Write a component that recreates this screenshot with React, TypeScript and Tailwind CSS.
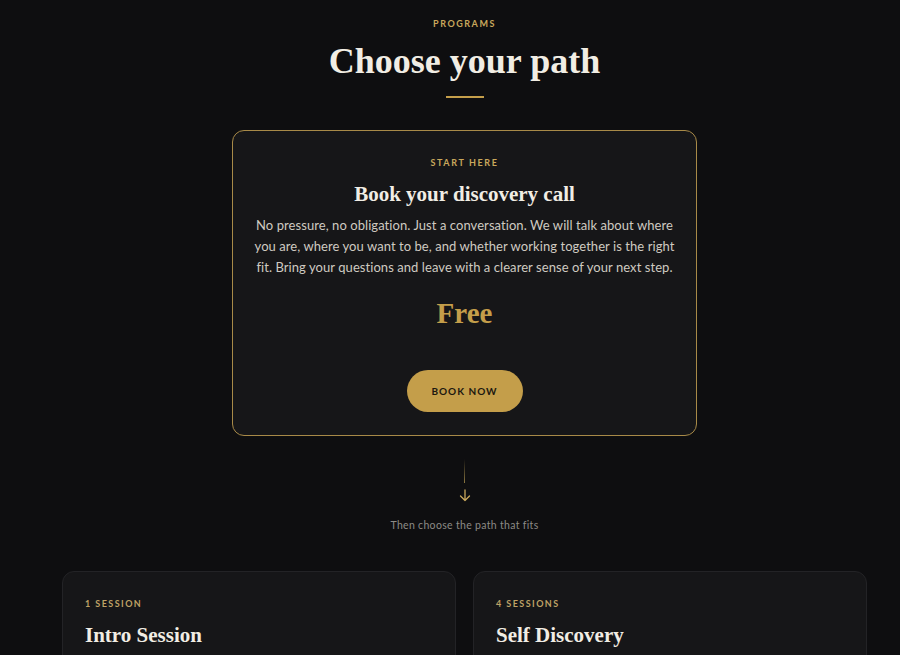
import React from "react";

const serif = { fontFamily: '"Liberation Serif", "DejaVu Serif", serif' };

export default function App() {
  return (
    <div
      className="min-h-[655px] w-full bg-[#0e0e10] text-[#ece8df] overflow-hidden"
      style={{ fontFamily: 'Lato, "Noto Sans", sans-serif' }}
    >
      <div className="flex flex-col items-center pt-[18px] pl-[29px]">
        <div className="text-[9px] leading-[12px] tracking-[0.17em] text-[#c9a85c] font-bold">
          PROGRAMS
        </div>
        <h1
          className="mt-[9px] text-[36px] leading-[44px] font-bold text-[#f1ede4]"
          style={serif}
        >
          Choose your path
        </h1>
        <div className="mt-[13px] h-[2px] w-[38px] bg-[#c49e4a]" />

        <div className="mt-[32px] w-[465px] h-[306px] rounded-[12px] border border-[#a88a48] bg-[#161618] flex flex-col items-center px-[20px]">
          <div className="mt-[26px] text-[9px] leading-[12px] tracking-[0.18em] text-[#c9a85c] font-bold">
            START HERE
          </div>
          <h2
            className="mt-[12px] text-[21px] leading-[26px] font-bold text-[#f1ede4]"
            style={serif}
          >
            Book your discovery call
          </h2>
          <p className="mt-[8px] text-center text-[13px] leading-[21px] tracking-[0.005em] text-[#cfcac1] whitespace-nowrap">
            No pressure, no obligation. Just a conversation. We will talk about where
            <br />
            you are, where you want to be, and whether working together is the right
            <br />
            fit. Bring your questions and leave with a clearer sense of your next step.
          </p>
          <div
            className="mt-[18px] text-[29px] leading-[34px] font-bold text-[#c49e4a]"
            style={serif}
          >
            Free
          </div>
          <button className="mt-[40px] h-[42px] w-[116px] rounded-full bg-[#c49e4a] text-[10px] font-bold tracking-[0.1em] text-[#1c1810]">
            BOOK NOW
          </button>
        </div>

        <div className="mt-[23px] flex flex-col items-center">
          <div className="h-[24px] w-px bg-gradient-to-b from-transparent to-[#8a7640]" />
          <svg width="12" height="13" viewBox="0 0 12 13" className="mt-[6px]" fill="none">
            <path d="M6 1v10.5M1.5 7l4.5 4.5L10.5 7" stroke="#c9a85c" strokeWidth="1.3" strokeLinecap="round" strokeLinejoin="round" />
          </svg>
        </div>
        <div className="mt-[16px] text-[10.5px] leading-[14px] tracking-[0.03em] text-[#8c8a86]">
          Then choose the path that fits
        </div>

        <div className="mt-[39px] grid w-[805px] grid-cols-2 gap-[17px]">
          {[
            { tag: "1 SESSION", title: "Intro Session" },
            { tag: "4 SESSIONS", title: "Self Discovery" },
          ].map((c) => (
            <div
              key={c.title}
              className="h-[140px] rounded-[12px] border border-[#232326] bg-[#161618] px-[22px] pt-[26px]"
            >
              <div className="text-[9px] leading-[12px] tracking-[0.16em] text-[#bfa266] font-bold">
                {c.tag}
              </div>
              <div
                className="mt-[12px] text-[21px] leading-[26px] font-bold text-[#f1ede4]"
                style={serif}
              >
                {c.title}
              </div>
            </div>
          ))}
        </div>
      </div>
    </div>
  );
}
